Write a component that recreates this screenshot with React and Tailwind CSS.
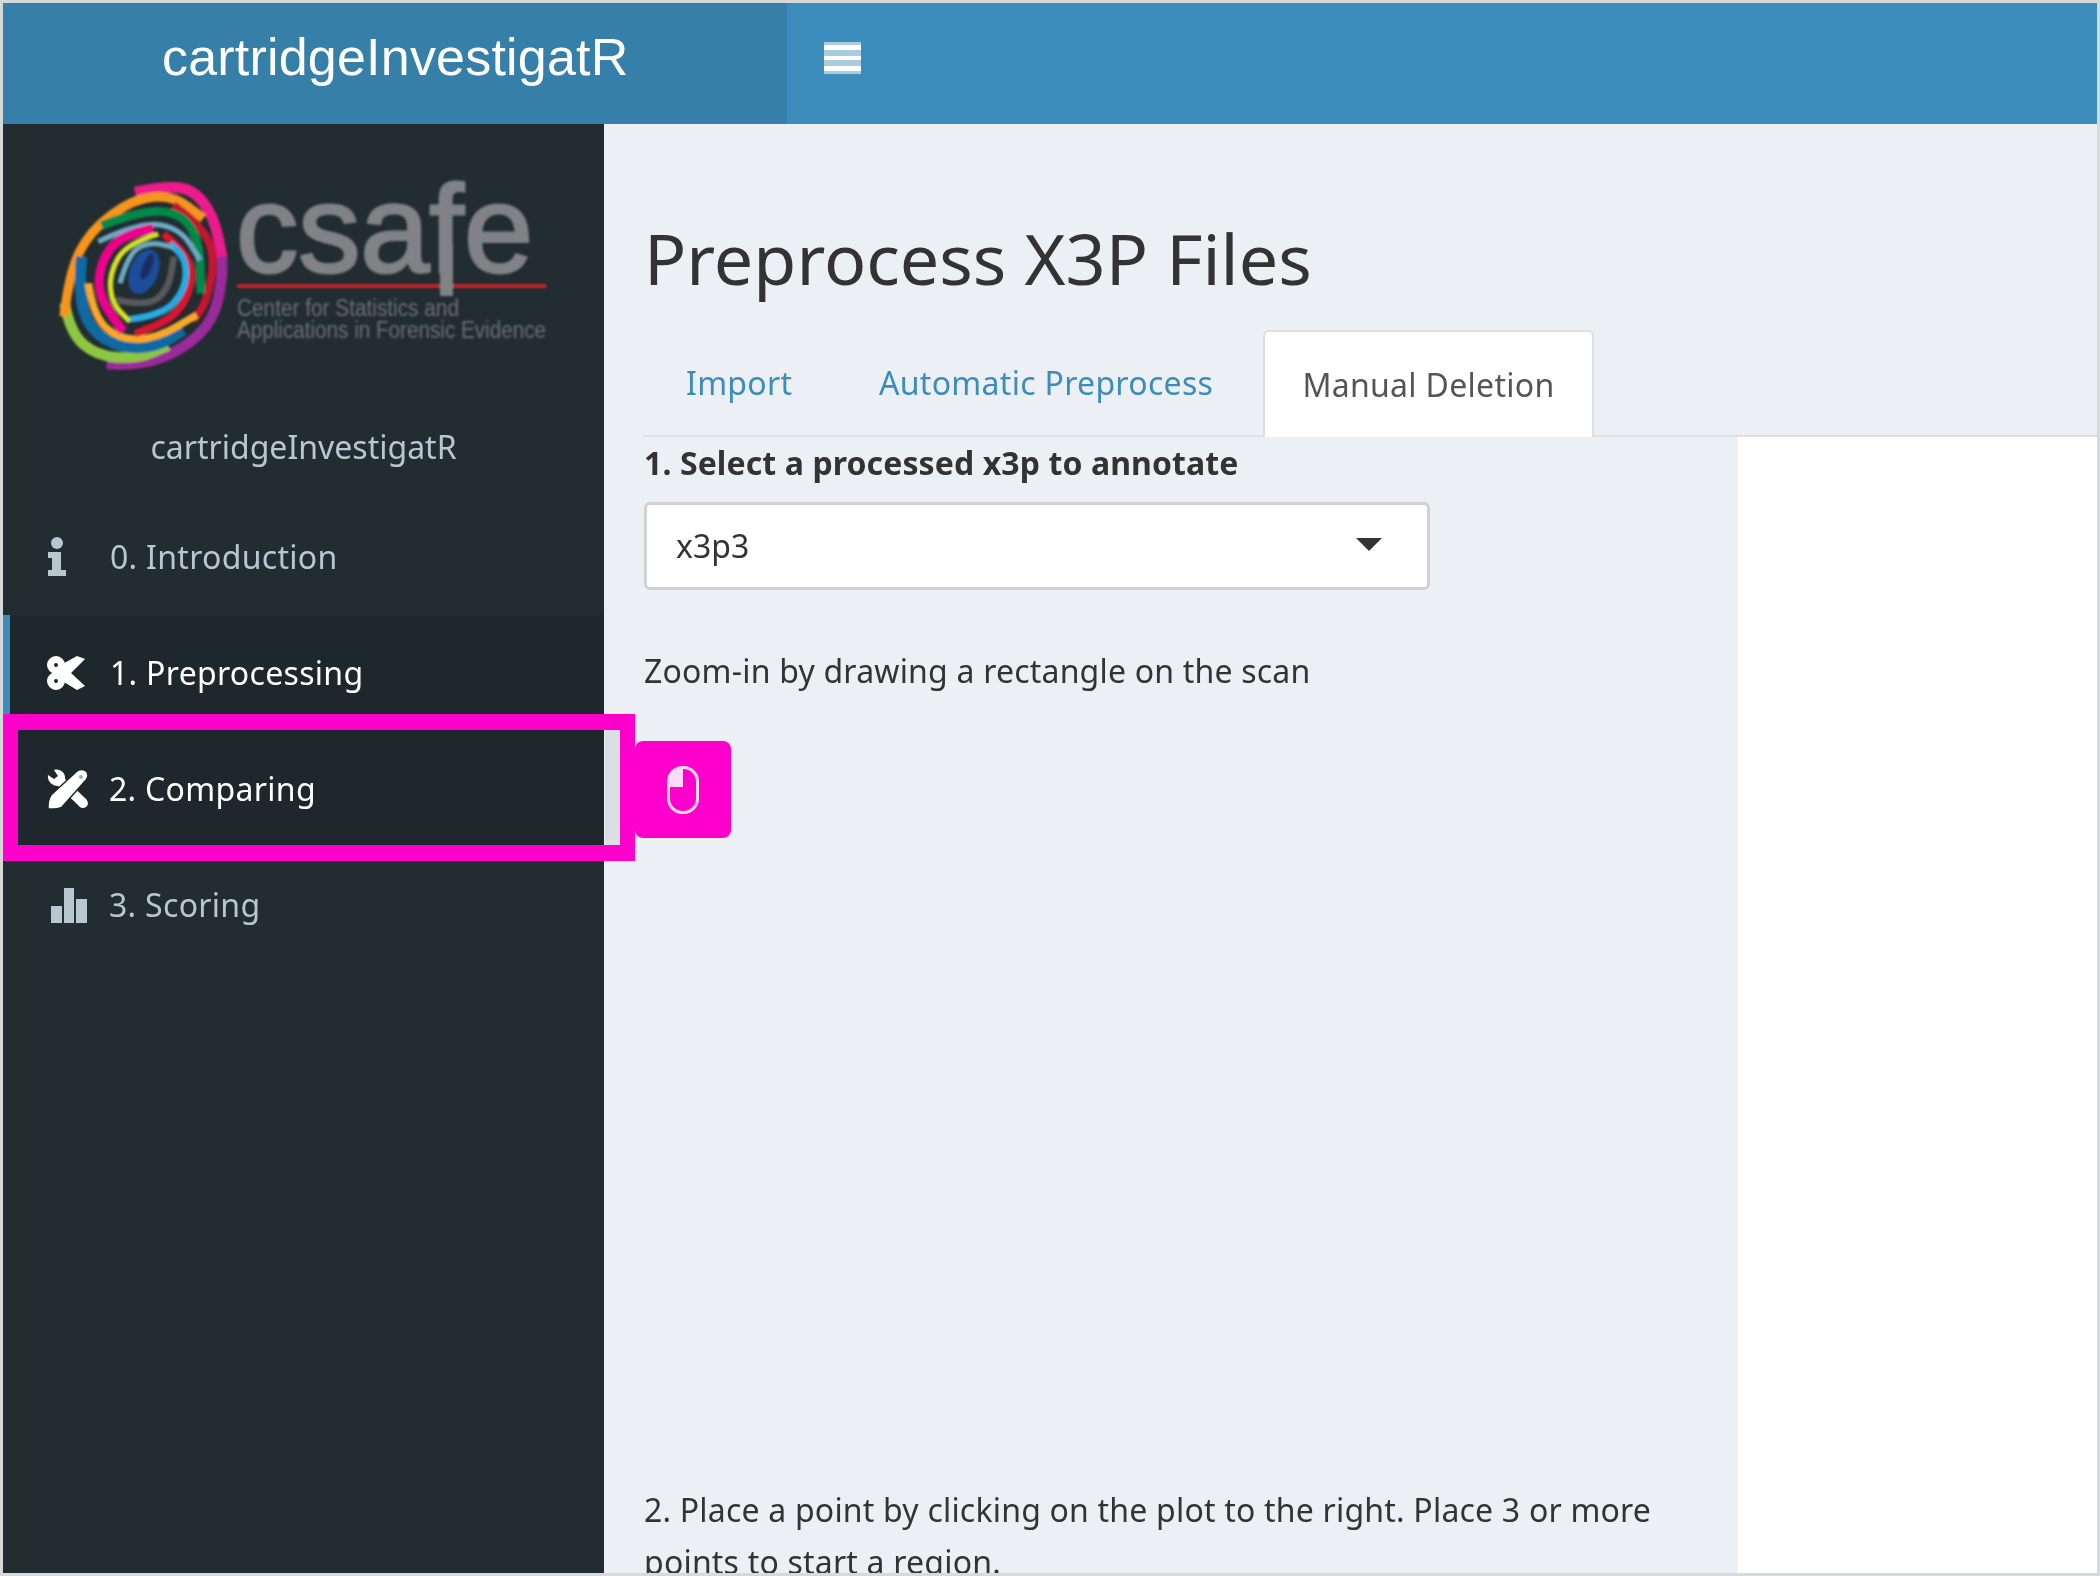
import { useState } from 'react'

// strokes of the csafe logo, traced from the reference: [colour, width, points]
const STROKES = [
  ['#9b2a9b', 32, [[200, 612], [300, 618], [430, 568], [522, 480], [548, 350], [545, 280]]],
  ['#ec1e8c', 32, [[285, 96], [370, 78], [460, 88], [522, 170], [546, 290]]],
  ['#8dc63f', 32, [[74, 430], [90, 518], [170, 588], [290, 596], [385, 556]]],
  ['#f7941e', 28, [[72, 470], [87, 340], [150, 212], [280, 116], [400, 106], [490, 175]]],
  ['#0b6ba3', 34, [[125, 290], [115, 400], [150, 510], [240, 564], [350, 561], [430, 510]]],
  ['#c4122f', 24, [[400, 135], [490, 200], [526, 300], [498, 430], [460, 480]]],
  ['#00894a', 26, [[185, 197], [300, 152], [420, 157], [478, 240], [483, 400]]],
  ['#6aa9c4', 16, [[175, 245], [300, 185], [420, 205], [480, 300]]],
  ['#f9a825', 22, [[145, 370], [160, 470], [240, 540], [350, 535], [470, 465]]],
  ['#ec008c', 28, [[340, 205], [240, 225], [180, 310], [175, 410], [250, 515]]],
  ['#d8132f', 22, [[370, 222], [445, 280], [460, 370], [410, 470], [285, 522]]],
  ['#d7df23', 16, [[355, 222], [260, 250], [208, 340], [215, 430], [270, 485]]],
  ['#27aae1', 20, [[270, 478], [370, 465], [435, 390], [440, 300], [390, 250]]],
  ['#6aa9c4', 16, [[240, 370], [265, 280], [330, 245], [400, 262]]],
  ['#58595b', 20, [[230, 420], [320, 440], [385, 390], [402, 290]]],
]

// turn traced points into a smooth line through their midpoints
const smooth = (pts) => {
  let d = `M${pts[0][0]} ${pts[0][1]}`
  for (let i = 1; i < pts.length - 1; i++) {
    const mx = (pts[i][0] + pts[i + 1][0]) / 2
    const my = (pts[i][1] + pts[i + 1][1]) / 2
    d += `Q${pts[i][0]} ${pts[i][1]} ${mx} ${my}`
  }
  const last = pts[pts.length - 1]
  return `${d}L${last[0]} ${last[1]}`
}

function CsafeLogo() {
  return (
    <svg width="510" height="200" viewBox="0 0 510 200" className="block">
      <defs>
        <filter id="soft" x="-5%" y="-5%" width="110%" height="110%">
          <feGaussianBlur stdDeviation="0.8" />
        </filter>
      </defs>
      <g filter="url(#soft)">
        <g transform="translate(-12 -14) scale(0.3333)">
          {STROKES.map(([color, sw, pts], i) => (
            <path key={i} d={smooth(pts)} fill="none" stroke={color} strokeWidth={sw} />
          ))}
          <ellipse cx="312" cy="335" rx="42" ry="70" transform="rotate(22 312 335)" fill="#1f4e9c" />
          <ellipse cx="322" cy="320" rx="14" ry="42" transform="rotate(22 322 320)" fill="#1b2f5e" />
        </g>
        <text x="184" y="98" fontFamily="Liberation Sans, sans-serif" fontSize="125" fill="#808285" stroke="#808285" strokeWidth="3" textLength="297" lengthAdjust="spacingAndGlyphs">csafe</text>
        <rect x="185" y="110" width="309" height="4" fill="#c4202e" />
        <rect x="388" y="70" width="13" height="52" fill="#808285" />
        <text x="185" y="142" fontFamily="Liberation Sans, sans-serif" fontSize="23" fill="#6d7073" textLength="222" lengthAdjust="spacingAndGlyphs">Center for Statistics and</text>
        <text x="185" y="164" fontFamily="Liberation Sans, sans-serif" fontSize="23" fill="#6d7073" textLength="309" lengthAdjust="spacingAndGlyphs">Applications in Forensic Evidence</text>
      </g>
    </svg>
  )
}

const InfoIcon = () => (
  <svg width="20" height="40" viewBox="0 0 20 40" fill="#b8c7ce" className="block">
    <circle cx="10" cy="6" r="6" />
    <path d="M1 15h13v18h5v6H1v-6h4V21H1z" />
  </svg>
)

const ScissorsIcon = () => (
  <svg width="38" height="34" viewBox="0 0 38 34" className="block">
    <path d="M12 10 30 0l8 3-14 14 14 13-8 4-18-11z" fill="#fff" />
    <circle cx="9" cy="9" r="5.5" fill="none" stroke="#fff" strokeWidth="7" />
    <circle cx="9" cy="25" r="5.5" fill="none" stroke="#fff" strokeWidth="7" />
  </svg>
)

const ToolsIcon = () => (
  <svg width="42" height="40" viewBox="0 0 42 40" className="block">
    <path d="M7 1c6-2 12 3 11 9l21 20c3 3 2 7 0 8-3 2-6 1-8-2L11 17C5 17 0 12 1 6l6 4 4-3-4-6z" fill="#fff" />
    <path d="M29 3c3-3 7-3 10-1 3 3 2 7 0 9L15 38c-3 2-9 2-13 2-1 0-1-1-1-2 0-4 1-9 3-12z" fill="#fff" stroke="#1e282c" strokeWidth="1.5" />
    <circle cx="34" cy="8" r="2" fill="#9fb0b8" />
  </svg>
)

const BarsIcon = () => (
  <svg width="36" height="35" viewBox="0 0 36 35" fill="#b8c7ce" className="block">
    <rect x="0" y="18" width="11" height="17" />
    <rect x="13" y="0" width="10" height="35" />
    <rect x="25" y="11" width="11" height="24" />
  </svg>
)

const MouseIcon = () => (
  <svg width="34" height="50" viewBox="0 0 34 50" className="block">
    <rect x="2.5" y="2.5" width="29" height="45" rx="14" fill="none" stroke="#fff" strokeWidth="3" opacity="0.85" />
    <path d="M4 22V15C4 8 9 4 16 4h1v18z" fill="#fff" opacity="0.85" />
  </svg>
)

const items = [
  { label: '0. Introduction', icon: <InfoIcon />, iconBox: 'pl-[44px] w-[107px]', row: 'h-[116px] text-[#b8c7ce]' },
  { label: '1. Preprocessing', icon: <ScissorsIcon />, iconBox: 'pl-[44px] w-[107px]', row: 'h-[116px] text-white bg-[#1e282c]', active: true },
  { label: '2. Comparing', icon: <ToolsIcon />, iconBox: 'pl-[44px] w-[106px]', row: 'h-[116px] text-white bg-[#1e282c]' },
  { label: '3. Scoring', icon: <BarsIcon />, iconBox: 'pl-[48px] w-[106px]', row: 'h-[116px] text-[#b8c7ce]' },
]

export default function App() {
  const [tab] = useState('Manual Deletion')

  return (
    <div className="flex h-[1576px] w-[2100px] flex-col overflow-hidden border-[3px] border-[#d6d8d9] bg-[#ecf0f5] font-['Noto_Sans',sans-serif] text-[#333]">
      <header className="flex h-[121px] shrink-0 bg-[#3c8dbc]">
        <div className="w-[784px] bg-[#367fa9] pl-[159px] pt-[24px] font-['Liberation_Sans',sans-serif] text-[52px] leading-[60px] tracking-[0.2px] text-white">
          cartridgeInvestigatR
        </div>
        <div className="ml-[37px] mt-[39px] flex h-[32px] w-[37px] flex-col gap-[6px] bg-[#a9cce1] py-[3px]">
          <span className="block h-[5px] w-full bg-white" />
          <span className="block h-[5px] w-full bg-white" />
          <span className="block h-[5px] w-full bg-white" />
        </div>
      </header>

      <div className="flex min-h-0 flex-1">
        <aside className="w-[601px] shrink-0 bg-[#222d32]">
          <div className="h-[375px] pl-[49px] pt-[50px]">
            <CsafeLogo />
            <p className="-ml-[49px] mt-[53px] text-center text-[32px] leading-[40px] text-[#b8c7ce]">cartridgeInvestigatR</p>
          </div>
          <nav className="relative">
            {items.map((item) => (
              <a key={item.label} className={`relative flex items-center text-[32px] tracking-[0.3px] ${item.row}`}>
                {item.active && <span className="absolute left-0 top-0 h-full w-[7px] bg-[#3c8dbc]" />}
                <span className={`block shrink-0 ${item.iconBox}`}>{item.icon}</span>
                <span>{item.label}</span>
              </a>
            ))}
            {/* pink highlight around the Comparing row */}
            <div className="pointer-events-none absolute left-0 top-[215px] h-[147px] w-[632px] border-x-[15px] border-y-[16px] border-[#ff00cc]">
              <div className="ml-auto h-full w-[15px] bg-[#dcdfe3]" />
            </div>
          </nav>
        </aside>

        <main className="flex min-w-0 flex-1 flex-col">
          <h1 className="pl-[40px] pt-[91px] text-[70px] font-normal leading-[86px]">Preprocess X3P Files</h1>
          <div className="ml-[39px] mt-[31px] flex h-[105px] items-end border-b-2 border-[#dddfe1] pl-[1px] text-[32px] tracking-[0.3px]">
            <div className="flex h-[105px] w-[192px] items-center pl-[42px] text-[#3c8dbc]">Import</div>
            <div className="flex h-[105px] w-[427px] items-center pl-[43px] text-[#3c8dbc]">Automatic Preprocess</div>
            <div className="-mb-[2px] flex h-[107px] w-[331px] items-center justify-center rounded-t-[6px] border-x-2 border-t-2 border-[#dddfe1] bg-white text-[#555]">
              {tab}
            </div>
          </div>

          <div className="flex min-h-0 flex-1">
            <div className="w-[1134px] shrink-0 pl-[40px]">
              <label className="block pt-[4px] text-[32px] font-bold leading-[44px] tracking-[0.1px]">1. Select a processed x3p to annotate</label>
              <div className="mt-[17px] flex h-[88px] w-[786px] items-center justify-between rounded-[6px] border-[3px] border-[#cfd1d3] bg-white pl-[29px] pr-[45px]">
                <span className="text-[32px]">x3p3</span>
                <span className="mb-[4px] h-0 w-0 border-x-[13px] border-t-[13px] border-x-transparent border-t-[#333]" />
              </div>
              <p className="mt-[59px] text-[32px] leading-[44px] tracking-[0.2px]">Zoom-in by drawing a rectangle on the scan</p>
              <button className="-ml-[9px] mt-[48px] flex h-[97px] w-[96px] items-center justify-center rounded-[8px] bg-[#ff00cc]">
                <MouseIcon />
              </button>
              <p className="mt-[646px] w-[1040px] text-[32px] leading-[52px] tracking-[0.2px]">
                2. Place a point by clicking on the plot to the right. Place 3 or more points to start a region.
              </p>
            </div>
            <div className="flex-1 bg-white" />
          </div>
        </main>
      </div>
    </div>
  )
}
